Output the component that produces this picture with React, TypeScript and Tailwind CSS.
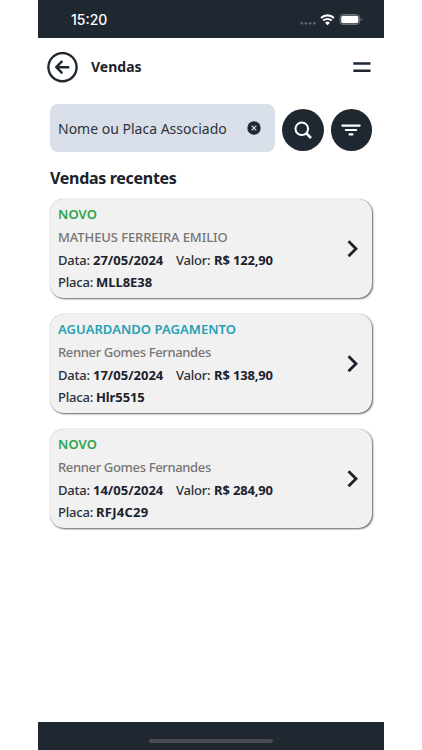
import { ReactNode } from 'react'
import clsx from 'clsx'

type Sale = {
  status: string
  statusClass: string
  name: string
  nameClass: string
  date: string
  value: string
  plate: string
  plateClass: string
}

const sales: Sale[] = [
  {
    status: 'NOVO',
    statusClass: 'text-[#2da44e] tracking-[0.1px]',
    name: 'MATHEUS FERREIRA EMILIO',
    nameClass: 'tracking-[-0.1px]',
    date: '27/05/2024',
    value: 'R$ 122,90',
    plate: 'MLL8E38',
    plateClass: 'tracking-[-0.05px]',
  },
  {
    status: 'AGUARDANDO PAGAMENTO',
    statusClass: 'text-[#24a0b4] tracking-[0.05px]',
    name: 'Renner Gomes Fernandes',
    nameClass: 'tracking-[-0.35px]',
    date: '17/05/2024',
    value: 'R$ 138,90',
    plate: 'Hlr5515',
    plateClass: 'tracking-[-0.1px]',
  },
  {
    status: 'NOVO',
    statusClass: 'text-[#2da44e] tracking-[0.1px]',
    name: 'Renner Gomes Fernandes',
    nameClass: 'tracking-[-0.35px]',
    date: '14/05/2024',
    value: 'R$ 284,90',
    plate: 'RFJ4C29',
    plateClass: 'tracking-[0.25px]',
  },
]

function StatusBar() {
  return (
    <div className="flex h-[38px] flex-none items-start justify-between bg-[#1f2731] pl-[33px] pr-[21px] pt-[11px] text-white">
      <span className="font-['Inter'] text-[14px] font-medium leading-[18px]">
        15:20
      </span>
      <svg width="64" height="18" viewBox="0 0 64 18" fill="none">
        <g fill="#5c636c">
          <circle cx="2.8" cy="12.3" r="1.4" />
          <circle cx="7" cy="12.3" r="1.4" />
          <circle cx="11.2" cy="12.3" r="1.4" />
          <circle cx="15.4" cy="12.3" r="1.4" />
        </g>
        <path
          d="M22 6.9a9.6 9.6 0 0 1 13 0M24.3 9.6a6.2 6.2 0 0 1 8.4 0"
          stroke="#fff"
          strokeWidth="2.1"
        />
        <path d="M28.5 14.2l-2.4-2.5a3.4 3.4 0 0 1 4.8 0z" fill="#fff" />
        <rect x="41" y="3.6" width="19.6" height="9.8" rx="3" stroke="#747a82" />
        <rect x="42.2" y="4.8" width="17.2" height="7.4" rx="1.8" fill="#fff" />
        <path d="M61.8 6.8c1.5.7 1.5 2.7 0 3.4z" fill="#747a82" />
      </svg>
    </div>
  )
}

function Header() {
  return (
    <header className="flex h-[58px] flex-none items-center justify-between pl-[9px] pr-[13px]">
      <div className="flex items-center gap-[13px]">
        <svg
          width="31"
          height="31"
          viewBox="0 0 31 31"
          fill="none"
          stroke="#1f2731"
          strokeLinecap="round"
          strokeLinejoin="round"
        >
          <circle cx="15.5" cy="15.2" r="14.1" strokeWidth="2.4" />
          <path d="M21.3 15.2H9.8M14.7 9.7l-5.5 5.5 5.5 5.5" strokeWidth="2.4" />
        </svg>
        <h1 className="text-[14px] font-bold leading-5">Vendas</h1>
      </div>
      <svg width="18" height="11" viewBox="0 0 18 11" fill="#1f2731">
        <path d="M.3 .3h17.2v2.4H.3zM.3 7.6h17.2V10H.3z" />
      </svg>
    </header>
  )
}

function RoundButton({ children }: { children: ReactNode }) {
  return (
    <button className="mt-[5px] flex h-[41.5px] w-[41.5px] flex-none items-center justify-center rounded-full bg-[#1f2731]">
      {children}
    </button>
  )
}

function SearchRow() {
  return (
    <div className="flex h-12 gap-[7px]">
      <div className="flex w-[225px] flex-none items-center justify-between rounded-lg bg-[#d9dfe8] pl-2 pr-[14px]">
        <span className="whitespace-nowrap text-[14px] text-[#2d333b]">
          Nome ou Placa Associado
        </span>
        <svg width="14" height="14" viewBox="0 0 14 14">
          <circle cx="7" cy="7" r="6.7" fill="#1f2731" />
          <path d="M4.7 4.7l4.6 4.6M9.3 4.7L4.7 9.3" stroke="#d9dfe8" strokeWidth="1.2" />
        </svg>
      </div>
      <RoundButton>
        <svg width="18" height="18" viewBox="0 0 18 18" fill="none" stroke="#fff">
          <circle cx="7.8" cy="7.8" r="6.3" strokeWidth="2" />
          <path d="M12.4 12.4l4.6 4.6" strokeWidth="2.5" />
        </svg>
      </RoundButton>
      <RoundButton>
        <svg
          width="20"
          height="14"
          viewBox="0 0 20 14"
          stroke="#fff"
          strokeWidth="2.1"
          strokeLinecap="round"
        >
          <path d="M1.3 2.6h17.4M4.8 7h10.4M8.5 11.4h3" />
        </svg>
      </RoundButton>
    </div>
  )
}

function SaleCard({ sale }: { sale: Sale }) {
  return (
    <li className="flex h-[99px] items-center justify-between rounded-[14px] bg-[#f1f1f1] pl-2 pr-[14px] shadow-[1px_1px_2px_rgba(0,0,0,0.6),0_0_1px_rgba(0,0,0,0.35)]">
      <div className="whitespace-nowrap text-[13px] font-medium leading-[22.7px] text-[#2a3038]">
        <p className={clsx('font-semibold', sale.statusClass)}>{sale.status}</p>
        <p className={clsx('text-[#757575]', sale.nameClass)}>{sale.name}</p>
        <div className="flex">
          <p className="w-[118px]">
            <span className="inline-block w-[35px] tracking-[-0.2px]">Data:</span>
            <b className="text-[#1b222c]">{sale.date}</b>
          </p>
          <p>
            <span className="inline-block w-[38px] tracking-[-0.2px]">Valor:</span>
            <b className="tracking-[-0.15px] text-[#1b222c]">{sale.value}</b>
          </p>
        </div>
        <p>
          <span className="inline-block w-[38px] tracking-[-0.2px]">Placa:</span>
          <b className={clsx('text-[#1b222c]', sale.plateClass)}>{sale.plate}</b>
        </p>
      </div>
      <svg width="11" height="18" viewBox="0 0 11 18" fill="none">
        <path d="M1.5 1.2L9 8.7l-7.5 7.5" stroke="#1b222c" strokeWidth="2.8" />
      </svg>
    </li>
  )
}

export default function App() {
  return (
    <div className="flex h-[750px] w-[422px] justify-center bg-white">
      <div className="flex w-[346px] flex-col font-['Noto_Sans',sans-serif] text-[#1b222c]">
        <StatusBar />
        <Header />
        <main className="flex-1 px-3 pt-2">
          <SearchRow />
          <h2 className="mt-[14px] text-[16px] font-bold leading-6 tracking-[-0.3px]">
            Vendas recentes
          </h2>
          <ul className="mt-[9px] flex flex-col gap-4">
            {sales.map((sale) => (
              <SaleCard key={sale.date} sale={sale} />
            ))}
          </ul>
        </main>
        <footer className="flex h-7 flex-none justify-center bg-[#1f2731] pt-[17px]">
          <span className="h-1 w-[124px] rounded-full bg-[#4c4c50]" />
        </footer>
      </div>
    </div>
  )
}
